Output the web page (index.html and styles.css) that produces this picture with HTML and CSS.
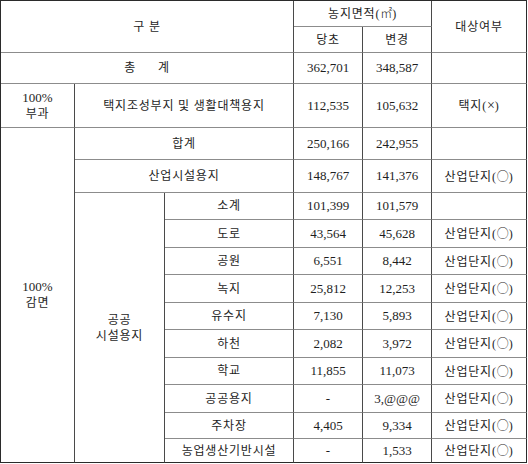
FILE: index.html
```html
<!DOCTYPE html>
<html lang="ko">
<head>
<meta charset="utf-8">
<link rel="stylesheet" href="styles.css">
</head>
<body>
<table class="grid">
  <colgroup>
    <col class="c1"><col class="c2"><col class="c3"><col class="c4"><col class="c5"><col class="c6">
  </colgroup>
  <tr class="h26">
    <td colspan="3" rowspan="2" class="ko">구 분</td>
    <td colspan="2" class="ko">농지면적(<span class="sym">㎡</span>)</td>
    <td rowspan="2" class="last ko">대상여부</td>
  </tr>
  <tr class="h26">
    <td class="ko">당초</td>
    <td class="ko">변경</td>
  </tr>
  <tr class="h31">
    <td colspan="3" class="ko">총<span class="gap"></span>계</td>
    <td class="num">362,701</td>
    <td class="num">348,587</td>
    <td class="last"></td>
  </tr>
  <tr class="h44">
    <td class="num">100%<br><span class="ko">부과</span></td>
    <td colspan="2" class="ko">택지조성부지 및 생활대책용지</td>
    <td class="num">112,535</td>
    <td class="num">105,632</td>
    <td class="last ko">택지(<span class="times">×</span>)</td>
  </tr>
  <tr class="h32">
    <td rowspan="12" class="bottom num">100%<br><span class="ko">감면</span></td>
    <td colspan="2" class="ko">합계</td>
    <td class="num">250,166</td>
    <td class="num">242,955</td>
    <td class="last"></td>
  </tr>
  <tr class="h33">
    <td colspan="2" class="ko">산업시설용지</td>
    <td class="num">148,767</td>
    <td class="num">141,376</td>
    <td class="last ko">산업단지(<span class="sym">○</span>)</td>
  </tr>
  <tr class="h27">
    <td rowspan="10" class="bottom ko">공공<br>시설용지</td>
    <td class="ko">소계</td>
    <td class="num">101,399</td>
    <td class="num">101,579</td>
    <td class="last"></td>
  </tr>
  <tr class="h28">
    <td class="ko">도로</td>
    <td class="num">43,564</td>
    <td class="num">45,628</td>
    <td class="last ko">산업단지(<span class="sym">○</span>)</td>
  </tr>
  <tr class="h27">
    <td class="ko">공원</td>
    <td class="num">6,551</td>
    <td class="num">8,442</td>
    <td class="last ko">산업단지(<span class="sym">○</span>)</td>
  </tr>
  <tr class="h28">
    <td class="ko">녹지</td>
    <td class="num">25,812</td>
    <td class="num">12,253</td>
    <td class="last ko">산업단지(<span class="sym">○</span>)</td>
  </tr>
  <tr class="h27">
    <td class="ko">유수지</td>
    <td class="num">7,130</td>
    <td class="num">5,893</td>
    <td class="last ko">산업단지(<span class="sym">○</span>)</td>
  </tr>
  <tr class="h28">
    <td class="ko">하천</td>
    <td class="num">2,082</td>
    <td class="num">3,972</td>
    <td class="last ko">산업단지(<span class="sym">○</span>)</td>
  </tr>
  <tr class="h27">
    <td class="ko">학교</td>
    <td class="num">11,855</td>
    <td class="num">11,073</td>
    <td class="last ko">산업단지(<span class="sym">○</span>)</td>
  </tr>
  <tr class="h28">
    <td class="ko">공공용지</td>
    <td class="num">-</td>
    <td class="num">3,@@@</td>
    <td class="last ko">산업단지(<span class="sym">○</span>)</td>
  </tr>
  <tr class="h26">
    <td class="ko">주차장</td>
    <td class="num">4,405</td>
    <td class="num">9,334</td>
    <td class="last ko">산업단지(<span class="sym">○</span>)</td>
  </tr>
  <tr class="h24">
    <td class="bottom ko">농업생산기반시설</td>
    <td class="num bottom">-</td>
    <td class="num bottom">1,533</td>
    <td class="last bottom ko">산업단지(<span class="sym">○</span>)</td>
  </tr>
</table>
</body>
</html>
```
FILE: styles.css
```css
html, body {
  margin: 0;
  padding: 0;
  background: #ffffff;
}

.grid {
  border-collapse: separate;
  border-spacing: 0;
  table-layout: fixed;
  width: 527px;
  border-top: 1px solid #2b2b2b;
  border-left: 1px solid #2b2b2b;
  font-family: "Liberation Serif", "Noto Sans CJK KR", serif;
  font-size: 12px;
  color: #1e1e1e;
}

.c1 { width: 74px; }
.c2 { width: 90px; }
.c3 { width: 129px; }
.c4 { width: 69px; }
.c5 { width: 69px; }
.c6 { width: 95px; }

.grid td {
  box-sizing: border-box;
  padding: 0;
  text-align: center;
  vertical-align: middle;
  border-right: 1px solid #4a4a4a;
  border-bottom: 1px solid #8c8c8c;
  line-height: 16px;
  white-space: nowrap;
}

.grid td.last {
  border-right-color: #2b2b2b;
}

.grid td.bottom {
  border-bottom-color: #2b2b2b;
}

.num {
  font-size: 13px;
}

.ko {
  font-size: 12px;
  letter-spacing: 0.8px;
}

.sym {
  font-family: "Noto Sans CJK KR", sans-serif;
  font-weight: 300;
  letter-spacing: 0;
}

.times {
  font-size: 14px;
  letter-spacing: 0;
}

.gap {
  display: inline-block;
  width: 22px;
}

.h24 { height: 24px; }
.h26 { height: 26px; }
.h27 { height: 27px; }
.h28 { height: 28px; }
.h31 { height: 31px; }
.h32 { height: 32px; }
.h33 { height: 33px; }
.h44 { height: 44px; }
```
